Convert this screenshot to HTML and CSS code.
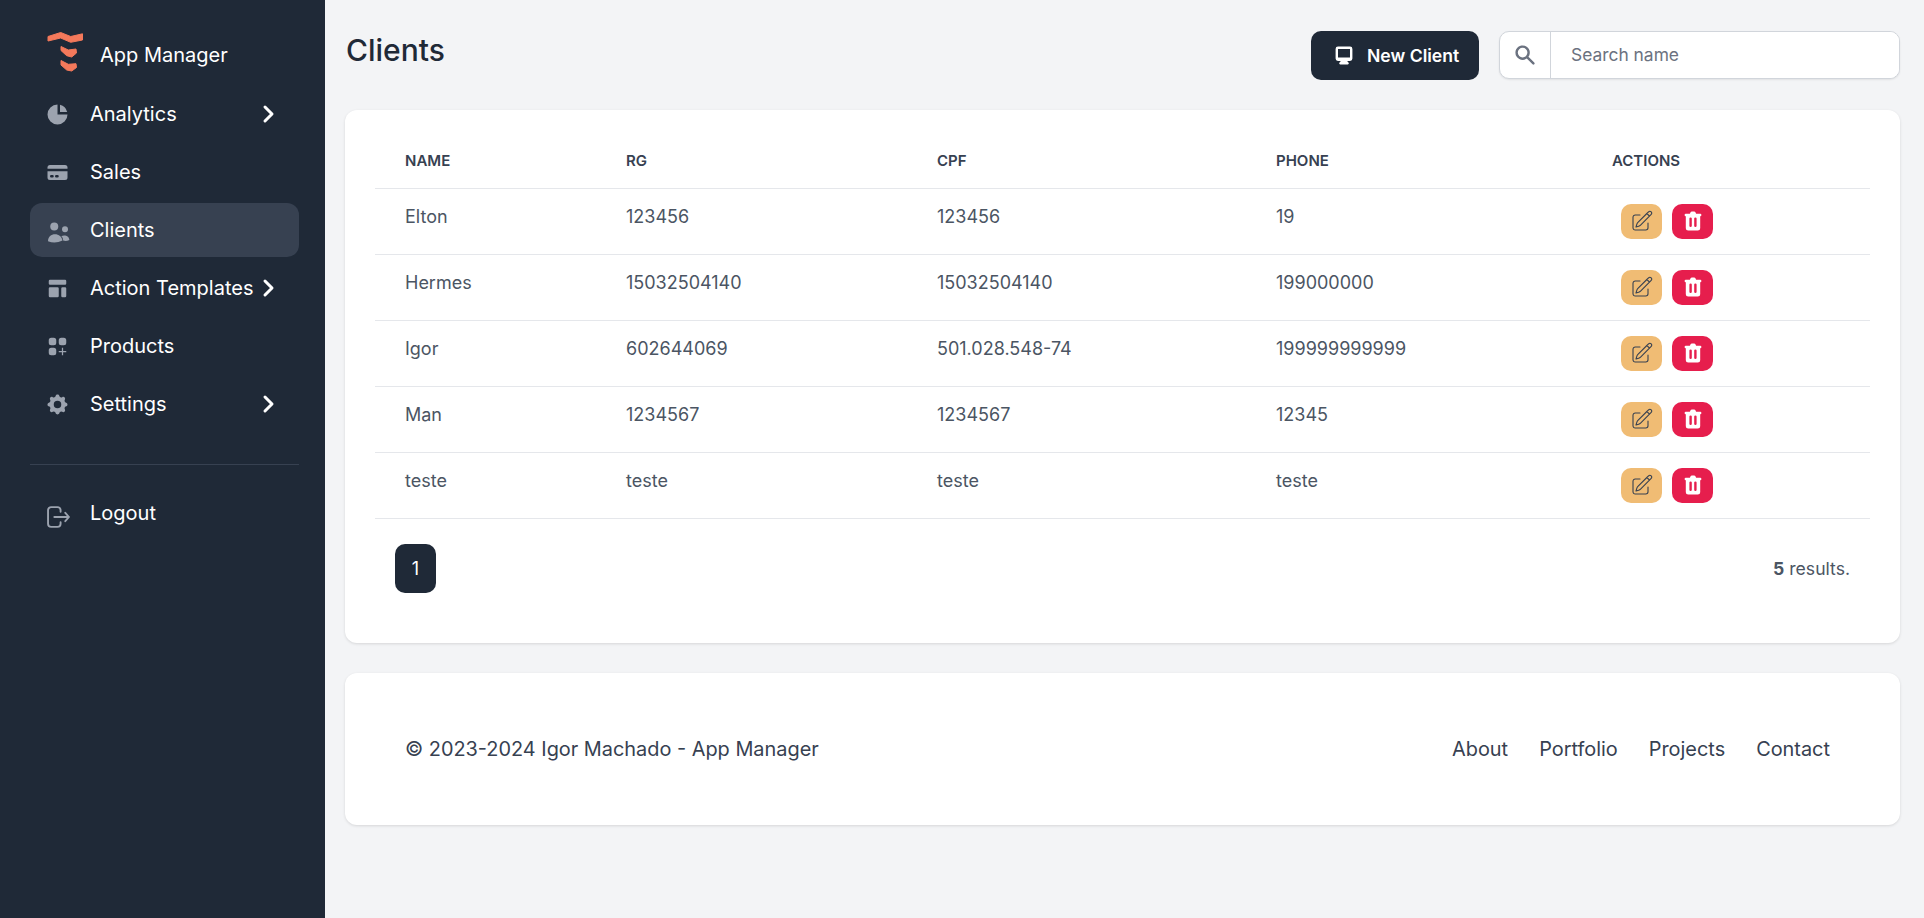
FILE: index.html
```html
<!DOCTYPE html>
<html lang="en">
<head>
    <meta charset="UTF-8">
    <meta name="viewport" content="width=device-width, initial-scale=1.0">
    <title>Clients - App Manager</title>
    <link rel="stylesheet" href="styles.css">
</head>
<body>
    <aside class="sidebar">
        <div class="brand">
            <svg class="brand-logo" viewBox="0 0 36 40" fill="#f4795b" stroke="#f4795b" stroke-width="1" stroke-linejoin="round">
                <path d="M1 4.5 L13.7 0.5 L23.7 4.5 L35.5 1.8 V8 L23.7 10.3 L13.7 6 L1 9 Z"/>
                <path d="M14 14.5 L21.3 18 L29 17 L29.5 21 L24.7 25 L19.7 23.7 L14 18.5 Z"/>
                <path d="M14 28.5 L21.3 32.3 L29 31.7 L29.5 35.5 L24.7 39 L19.7 38 L14 33 Z"/>
            </svg>
            <span class="brand-name">App Manager</span>
        </div>
        <nav class="nav">
            <a class="nav-item">
                <svg class="nav-icon" viewBox="0 0 20 20" fill="currentColor"><path d="M2 10a8 8 0 018-8v8h8a8 8 0 11-16 0z"/><path d="M12 2.252A8.014 8.014 0 0117.748 8H12V2.252z"/></svg>
                <span class="nav-label">Analytics</span>
                <svg class="chevron" viewBox="0 0 24 24" fill="none" stroke="currentColor" stroke-width="3" stroke-linecap="round" stroke-linejoin="round"><path d="M9 5l7 7-7 7"/></svg>
            </a>
            <a class="nav-item">
                <svg class="nav-icon" viewBox="0 0 20 20" fill="currentColor"><path d="M4 4a2 2 0 00-2 2v1h16V6a2 2 0 00-2-2H4z"/><path fill-rule="evenodd" d="M18 9H2v5a2 2 0 002 2h12a2 2 0 002-2V9zM4 13a1 1 0 011-1h1a1 1 0 110 2H5a1 1 0 01-1-1zm5-1a1 1 0 100 2h1a1 1 0 100-2H9z" clip-rule="evenodd"/></svg>
                <span class="nav-label">Sales</span>
            </a>
            <a class="nav-item active">
                <svg class="nav-icon" viewBox="0 0 20 20" fill="currentColor"><circle cx="7.4" cy="6.8" r="3.2"/><circle cx="16" cy="9" r="2.4"/><path d="M2.4 18.5 C2.4 15 5 13 8 13 C11 13 13.5 15 14 18 Q8 21 2.4 18.5Z"/><path d="M13 14.5 C15 13.5 19 13.5 19.5 17.5 Q17 18.8 14.5 18 C14.5 16.5 14 15.3 13 14.5Z"/></svg>
                <span class="nav-label">Clients</span>
            </a>
            <a class="nav-item">
                <svg class="nav-icon" viewBox="0 0 20 20" fill="currentColor"><path d="M3 4a1 1 0 011-1h12a1 1 0 011 1v2a1 1 0 01-1 1H4a1 1 0 01-1-1V4zM3 10a1 1 0 011-1h6a1 1 0 011 1v6a1 1 0 01-1 1H4a1 1 0 01-1-1v-6zM14 9a1 1 0 00-1 1v6a1 1 0 001 1h2a1 1 0 001-1v-6a1 1 0 00-1-1h-2z"/></svg>
                <span class="nav-label">Action Templates</span>
                <svg class="chevron" viewBox="0 0 24 24" fill="none" stroke="currentColor" stroke-width="3" stroke-linecap="round" stroke-linejoin="round"><path d="M9 5l7 7-7 7"/></svg>
            </a>
            <a class="nav-item">
                <svg class="nav-icon" viewBox="0 0 20 20" fill="currentColor"><path d="M5 3a2 2 0 00-2 2v2a2 2 0 002 2h2a2 2 0 002-2V5a2 2 0 00-2-2H5zM5 11a2 2 0 00-2 2v2a2 2 0 002 2h2a2 2 0 002-2v-2a2 2 0 00-2-2H5zM11 5a2 2 0 012-2h2a2 2 0 012 2v2a2 2 0 01-2 2h-2a2 2 0 01-2-2V5z"/><path d="M14 11v6M11 14h6" fill="none" stroke="currentColor" stroke-width="1"/></svg>
                <span class="nav-label">Products</span>
            </a>
            <a class="nav-item">
                <svg class="nav-icon" viewBox="0 0 20 20" fill="currentColor"><path fill-rule="evenodd" d="M11.49 3.17c-.38-1.56-2.6-1.56-2.98 0a1.532 1.532 0 01-2.286.948c-1.372-.836-2.942.734-2.106 2.106.54.886.061 2.042-.947 2.287-1.561.379-1.561 2.6 0 2.978a1.532 1.532 0 01.947 2.287c-.836 1.372.734 2.942 2.106 2.106a1.532 1.532 0 012.287.947c.379 1.561 2.6 1.561 2.978 0a1.533 1.533 0 012.287-.947c1.372.836 2.942-.734 2.106-2.106a1.533 1.533 0 01.947-2.287c1.561-.379 1.561-2.6 0-2.978a1.532 1.532 0 01-.947-2.287c.836-1.372-.734-2.942-2.106-2.106a1.532 1.532 0 01-2.287-.947zM10 13a3 3 0 100-6 3 3 0 000 6z" clip-rule="evenodd"/></svg>
                <span class="nav-label">Settings</span>
                <svg class="chevron" viewBox="0 0 24 24" fill="none" stroke="currentColor" stroke-width="3" stroke-linecap="round" stroke-linejoin="round"><path d="M9 5l7 7-7 7"/></svg>
            </a>
        </nav>
        <div class="nav nav-bottom">
            <a class="nav-item">
                <svg class="nav-icon logout-icon" viewBox="2 1.5 22 21" fill="none" stroke="currentColor" stroke-width="1.8" stroke-linecap="round" stroke-linejoin="round"><path d="M15 7V5.5A3 3 0 0012 2.5H6A3 3 0 003 5.5v13a3 3 0 003 3h6a3 3 0 003-3V17"/><path d="M9 12h14M19.5 8l3.5 4-3.5 4"/></svg>
                <span class="nav-label">Logout</span>
            </a>
        </div>
    </aside>

    <main class="content">
        <header class="topbar">
            <h1>Clients</h1>
            <div class="topbar-actions">
                <button class="btn-new">
                    <svg viewBox="0 0 20 20" fill="currentColor"><path fill-rule="evenodd" d="M3 5a2 2 0 012-2h10a2 2 0 012 2v8a2 2 0 01-2 2h-2.22l.123.489.804.804A1 1 0 0113 18H7a1 1 0 01-.707-1.707l.804-.804L7.22 15H5a2 2 0 01-2-2V5zm5.771 7H5V5h10v7H8.771z" clip-rule="evenodd"/></svg>
                    New Client
                </button>
                <div class="search">
                    <span class="search-icon">
                        <svg viewBox="0 0 20 20" fill="currentColor"><path fill-rule="evenodd" d="M8 4a4 4 0 100 8 4 4 0 000-8zM2 8a6 6 0 1110.89 3.476l4.817 4.817a1 1 0 01-1.414 1.414l-4.816-4.816A6 6 0 012 8z" clip-rule="evenodd"/></svg>
                    </span>
                    <input type="text" placeholder="Search name">
                </div>
            </div>
        </header>

        <section class="card card-table">
            <table class="clients">
                <colgroup>
                    <col class="col-name"><col class="col-rg"><col class="col-cpf"><col class="col-phone"><col>
                </colgroup>
                <thead>
                    <tr><th>Name</th><th>RG</th><th>CPF</th><th>Phone</th><th>Actions</th></tr>
                </thead>
                <tbody id="rows"></tbody>
            </table>
            <div class="table-footer">
                <button class="page-btn">1</button>
                <p class="results"><strong>5</strong> results.</p>
            </div>
        </section>

        <footer class="card card-footer">
            <p>© 2023-2024 Igor Machado - App Manager</p>
            <ul class="footer-links">
                <li>About</li>
                <li>Portfolio</li>
                <li>Projects</li>
                <li>Contact</li>
            </ul>
        </footer>
    </main>

    <script>
        const clients = [
            ['Elton', '123456', '123456', '19'],
            ['Hermes', '15032504140', '15032504140', '199000000'],
            ['Igor', '602644069', '501.028.548-74', '199999999999'],
            ['Man', '1234567', '1234567', '12345'],
            ['teste', 'teste', 'teste', 'teste']
        ];

        const editIcon = '<svg viewBox="0 0 24 24" fill="none" stroke="currentColor" stroke-width="1.1" stroke-linecap="round" stroke-linejoin="round"><path d="M16.862 4.487l1.687-1.688a1.875 1.875 0 112.652 2.652L10.582 16.07a4.5 4.5 0 01-1.897 1.13L6 18l.8-2.685a4.5 4.5 0 011.13-1.897l8.932-8.931zm0 0L19.5 7.125M18 14v4.75A2.25 2.25 0 0115.75 21H5.25A2.25 2.25 0 013 18.75V8.25A2.25 2.25 0 015.25 6H10"/></svg>';
        const trashIcon = '<svg viewBox="0 0 20 20" fill="currentColor"><path fill-rule="evenodd" d="M9 2a1 1 0 00-.894.553L7.382 4H4a1 1 0 000 2v10a2 2 0 002 2h8a2 2 0 002-2V6a1 1 0 100-2h-3.382l-.724-1.447A1 1 0 0011 2H9zM7 8a1 1 0 012 0v6a1 1 0 11-2 0V8zm5-1a1 1 0 00-1 1v6a1 1 0 102 0V8a1 1 0 00-1-1z" clip-rule="evenodd"/></svg>';

        document.getElementById('rows').innerHTML = clients.map(row => `
            <tr>
                ${row.map(cell => `<td>${cell}</td>`).join('')}
                <td class="actions">
                    <button class="btn-icon btn-edit">${editIcon}</button>
                    <button class="btn-icon btn-delete">${trashIcon}</button>
                </td>
            </tr>`).join('');
    </script>
</body>
</html>
```

FILE: styles.css
```css
* {
    box-sizing: border-box;
}

html, body {
    margin: 0;
    height: 100%;
}

body {
    display: flex;
    font-family: Inter, "Liberation Sans", sans-serif;
    background-color: #f3f4f6;
    color: #374151;
    overflow: hidden;
}

/* Sidebar */
.sidebar {
    width: 325px;
    flex-shrink: 0;
    padding: 30px 26px 0 30px;
    background-color: #1f2937;
    color: #fff;
}

.brand {
    display: flex;
    align-items: center;
    gap: 17px;
    height: 44px;
    padding-left: 17px;
    margin-bottom: 13px;
    font-size: 20px;
}

.brand-logo {
    width: 36px;
    height: 40px;
}

.brand-name {
    margin-top: 6px;
}

.nav {
    display: flex;
    flex-direction: column;
    gap: 4px;
}

.nav-bottom {
    margin-top: 33px;
    padding-top: 21px;
    border-top: 1px solid #374151;
}

.nav-item {
    display: flex;
    align-items: center;
    height: 54px;
    padding: 0 17px 0 15px;
    border-radius: 12px;
    font-size: 20px;
}

.nav-item.active {
    background-color: #374151;
}

.nav-icon {
    width: 25px;
    height: 25px;
    flex-shrink: 0;
    color: #9ca3af;
}

.logout-icon {
    width: 23px;
    height: 22px;
    margin: 7px 0 0 2px;
}

.nav-label {
    margin-left: 20px;
    flex: 1;
    white-space: nowrap;
}

.chevron {
    width: 24px;
    height: 24px;
    margin-right: 2px;
    flex-shrink: 0;
}

/* Main area */
.content {
    flex: 1;
    min-width: 0;
    padding: 30px 24px 0 20px;
}

.topbar {
    display: flex;
    justify-content: space-between;
    height: 50px;
    margin-bottom: 30px;
}

.topbar h1 {
    margin: 0;
    padding-left: 1px;
    font-size: 30px;
    font-weight: 500;
    line-height: 40px;
    color: #1f2937;
}

.topbar-actions {
    display: flex;
    gap: 20px;
    padding-top: 1px;
}

.btn-new {
    display: flex;
    align-items: center;
    gap: 11px;
    width: 168px;
    height: 49px;
    padding: 0 0 1px 21px;
    border: 0;
    border-radius: 10px;
    background-color: #1f2937;
    color: #fff;
    font-family: inherit;
    font-size: 17.6px;
    font-weight: 600;
}

.btn-new svg {
    width: 24px;
    height: 24px;
}

.search {
    display: flex;
    width: 401px;
    height: 48px;
    background-color: #fff;
    border: 1px solid #d1d5db;
    border-radius: 10px;
    box-shadow: 0 1px 2px rgba(0, 0, 0, 0.08);
    overflow: hidden;
}

.search-icon {
    display: flex;
    align-items: center;
    justify-content: center;
    width: 51px;
    border-right: 1px solid #d1d5db;
    color: #6b7280;
}

.search-icon svg {
    width: 24px;
    height: 24px;
}

.search input {
    flex: 1;
    min-width: 0;
    padding: 0 20px 1px;
    border: 0;
    outline: 0;
    font-family: inherit;
    font-size: 17.4px;
}

.search input::placeholder {
    color: #6b7280;
}

.card {
    background-color: #fff;
    border-radius: 12px;
    box-shadow: 0 1px 3px rgba(0, 0, 0, 0.12);
}

.card-table {
    height: 533px;
    padding: 30px;
}

.clients {
    width: 100%;
    border-collapse: collapse;
    table-layout: fixed;
}

.col-name { width: 221px; }
.col-rg { width: 311px; }
.col-cpf { width: 339px; }
.col-phone { width: 336px; }

.clients th {
    height: 48px;
    padding: 0 0 6px 30px;
    text-align: left;
    text-transform: uppercase;
    font-size: 15px;
    font-weight: 600;
    color: #374151;
}

.clients tr {
    border-bottom: 1px solid #e5e7eb;
}

.clients td {
    height: 66px;
    padding: 0 0 10px 30px;
    font-size: 18px;
    color: #4b5563;
}

.clients td.actions {
    padding: 0 0 0 39px;
}

.btn-icon {
    display: inline-flex;
    align-items: center;
    justify-content: center;
    width: 41px;
    height: 35px;
    padding: 0;
    margin-right: 5px;
    border: 0;
    border-radius: 10px;
    vertical-align: middle;
}

.btn-icon svg {
    width: 24px;
    height: 24px;
}

.btn-edit {
    background-color: #f0bc74;
    color: #374151;
}

.btn-delete {
    background-color: #e61e4d;
    color: #fff;
}

.table-footer {
    display: flex;
    justify-content: space-between;
    align-items: center;
    padding: 25px 20px 0;
}

.page-btn {
    width: 41px;
    height: 49px;
    border: 0;
    border-radius: 10px;
    background-color: #1f2937;
    color: #fff;
    font-family: inherit;
    font-size: 18px;
}

.results {
    margin: 0;
    font-size: 17.6px;
    color: #4b5563;
}

.card-footer {
    display: flex;
    justify-content: space-between;
    align-items: center;
    height: 152px;
    margin-top: 30px;
    padding: 0 70px 0 60px;
    font-size: 19.9px;
    color: #374151;
}

.card-footer p {
    margin: 0;
}

.footer-links {
    display: flex;
    gap: 31px;
    margin: 0;
    padding: 0;
    list-style: none;
}
```
